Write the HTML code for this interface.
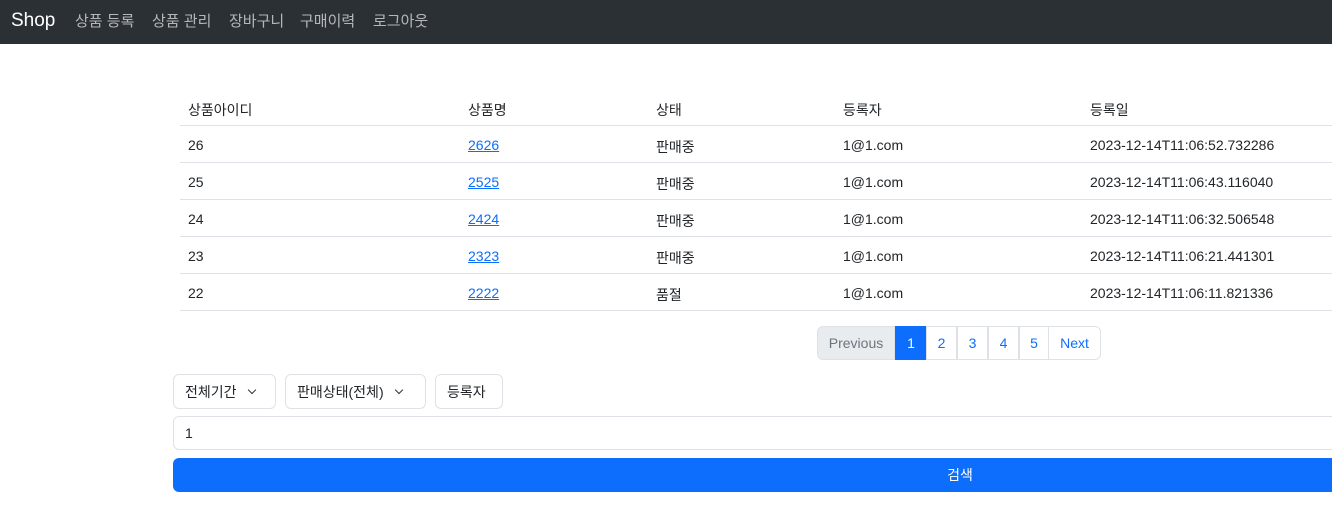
<!DOCTYPE html>
<html><head><meta charset="utf-8"><style>
*{box-sizing:border-box;margin:0;padding:0}
body{width:1332px;height:519px;overflow:hidden;background:#fff;font-family:"Liberation Sans","Noto Sans CJK KR",sans-serif;font-size:14px;color:#212529;position:relative}
.nav{position:absolute;left:0;top:0;width:1332px;height:44px;background:#2b3035}
.nav .brand{position:absolute;left:11px;top:10px;font-size:19px;color:#fff}
.nav a{position:absolute;top:10px;color:rgba(255,255,255,.65);font-size:15px;text-decoration:none}
.row{position:absolute;left:180px;width:1200px;height:37px;border-bottom:1px solid #dee2e6}
.row span{position:absolute;top:11px}
.row a{color:#0d6efd;text-decoration:underline}
.c1{left:8px}.c2{left:288px}.c3{left:476px}.c4{left:663px}.c5{left:910px}
.pg{position:absolute;top:326px;height:34px;border:1px solid #dee2e6;display:flex;align-items:center;justify-content:center;color:#0d6efd;font-size:14px;margin-left:-1px}
.btn{position:absolute;top:374px;height:35px;border:1px solid #dee2e6;border-radius:6px;padding:0 11px;display:flex;align-items:center;font-size:14px}
.chev{display:inline-block;width:6px;height:6px;border-right:1.5px solid #333;border-bottom:1.5px solid #333;transform:rotate(45deg);margin:-3px 4px 0 12px}
</style></head><body>
<div class="nav"><span class="brand">Shop</span>
<a style="left:75px">상품 등록</a><a style="left:152px">상품 관리</a><a style="left:229px">장바구니</a><a style="left:300px">구매이력</a><a style="left:373px">로그아웃</a></div>
<div class="row" style="top:89px"><span class="c1">상품아이디</span><span class="c2">상품명</span><span class="c3">상태</span><span class="c4">등록자</span><span class="c5">등록일</span></div>
<div class="row" style="top:126px"><span class="c1">26</span><span class="c2"><a>2626</a></span><span class="c3">판매중</span><span class="c4">1@1.com</span><span class="c5">2023-12-14T11:06:52.732286</span></div>
<div class="row" style="top:163px"><span class="c1">25</span><span class="c2"><a>2525</a></span><span class="c3">판매중</span><span class="c4">1@1.com</span><span class="c5">2023-12-14T11:06:43.116040</span></div>
<div class="row" style="top:200px"><span class="c1">24</span><span class="c2"><a>2424</a></span><span class="c3">판매중</span><span class="c4">1@1.com</span><span class="c5">2023-12-14T11:06:32.506548</span></div>
<div class="row" style="top:237px"><span class="c1">23</span><span class="c2"><a>2323</a></span><span class="c3">판매중</span><span class="c4">1@1.com</span><span class="c5">2023-12-14T11:06:21.441301</span></div>
<div class="row" style="top:274px"><span class="c1">22</span><span class="c2"><a>2222</a></span><span class="c3">품절</span><span class="c4">1@1.com</span><span class="c5">2023-12-14T11:06:11.821336</span></div>
<div class="pg" style="left:818px;width:78px;background:#e9ecef;color:#6c757d;border-radius:6px 0 0 6px">Previous</div>
<div class="pg" style="left:896px;width:32px;background:#0d6efd;border-color:#0d6efd;color:#fff">1</div>
<div class="pg" style="left:927px;width:31px">2</div>
<div class="pg" style="left:958px;width:31px">3</div>
<div class="pg" style="left:989px;width:31px">4</div>
<div class="pg" style="left:1020px;width:30px">5</div>
<div class="pg" style="left:1049px;width:53px;border-radius:0 6px 6px 0">Next</div>
<div class="btn" style="left:173px;width:103px">전체기간<span class="chev"></span></div>
<div class="btn" style="left:285px;width:141px">판매상태(전체)<span class="chev"></span></div>
<div class="btn" style="left:435px;width:68px">등록자</div>
<div style="position:absolute;left:173px;top:416px;width:1400px;height:34px;border:1px solid #dee2e6;border-radius:6px;padding:8px 11px">1</div>
<div style="position:absolute;left:173px;top:458px;width:1574px;height:34px;background:#0d6efd;border-radius:6px;color:#fff;text-align:center;line-height:34px">검색</div>
</body></html>
